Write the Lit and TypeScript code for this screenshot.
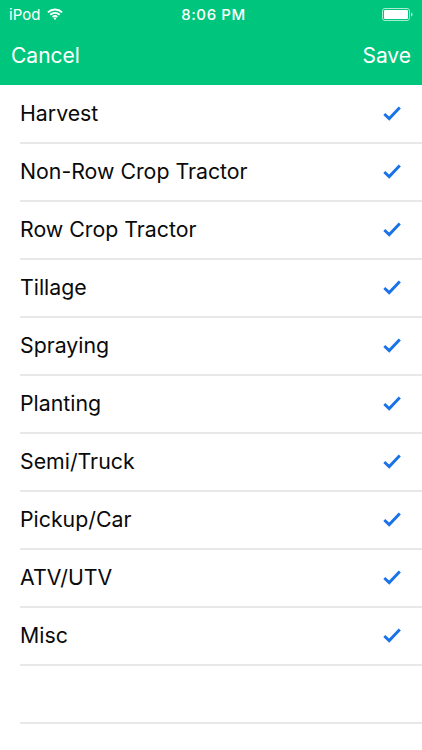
import { LitElement, html, css } from "lit";
import { customElement } from "lit/decorators.js";

const ITEMS = ["Harvest", "Non-Row Crop Tractor", "Row Crop Tractor", "Tillage", "Spraying", "Planting", "Semi/Truck", "Pickup/Car", "ATV/UTV", "Misc"];

@customElement("app-root")
export class AppRoot extends LitElement {
  static styles = css`
    :host { display: block; width: 422px; height: 750px; overflow: hidden; background: #fff; font-family: Inter, "Liberation Sans", sans-serif; }
    .head { height: 85px; background: #00c67d; color: #fff; display: flex; flex-direction: column; }
    .status { height: 28px; padding: 0 9px 0 9px; display: grid; grid-template-columns: 1fr auto 1fr; align-items: center; font-size: 15px; }
    .left { display: flex; align-items: center; gap: 7px; }
    .time { font-weight: 500; font-size: 15px; letter-spacing: 0.6px; margin-left: 5px; }
    .right { display: flex; justify-content: flex-end; }
    .nav { flex: 1; display: flex; justify-content: space-between; align-items: center; padding: 0 11px 2px 11px; font-size: 21px; }
    .list { padding-top: 1px; }
    .row { height: 54px; padding-bottom: 2px; margin-left: 20px; border-bottom: 2px solid #e8e8e8; display: flex; align-items: center; justify-content: space-between; padding-right: 21px; font-size: 21.3px; color: #0a0a0a; }
    svg { display: block; }
  `;
  render() {
    return html`
      <div class="head">
        <div class="status">
          <div class="left"><span>iPod</span>
            <svg width="16" height="12" viewBox="0 0 18 13" fill="none" stroke="#fff" stroke-width="2.1">
              <path d="M1 4.6C5.5 .4 12.5 .4 17 4.6"/><path d="M3.7 7.3c3-2.7 7.6-2.7 10.6 0"/><path d="M6.3 9.9c1.5-1.3 3.9-1.3 5.4 0"/>
              <circle cx="9" cy="11.6" r="1.3" fill="#fff" stroke="none"/>
            </svg>
          </div>
          <div class="time">8:06 PM</div>
          <div class="right">
            <svg width="31" height="13" viewBox="0 0 31 13">
              <rect x=".5" y=".5" width="27" height="12" rx="2.5" fill="none" stroke="#a9ecd2"/>
              <rect x="2" y="2" width="24" height="9" rx="1.2" fill="#fff"/>
              <path d="M29 4.5c1 .2 1.6 1 1.6 2s-.6 1.8-1.6 2z" fill="#a9ecd2"/>
            </svg>
          </div>
        </div>
        <div class="nav"><span>Cancel</span><span>Save</span></div>
      </div>
      <div class="list">
        ${ITEMS.map((t) => html`<div class="row"><span>${t}</span>
          <svg width="18" height="15" viewBox="0 0 18 15" fill="none" stroke="#1a73e8" stroke-width="2.9"><path d="M1.3 8l4.9 4.6L16.8 1.6"/></svg>
        </div>`)}
        <div class="row"></div>
      </div>
    `;
  }
}
